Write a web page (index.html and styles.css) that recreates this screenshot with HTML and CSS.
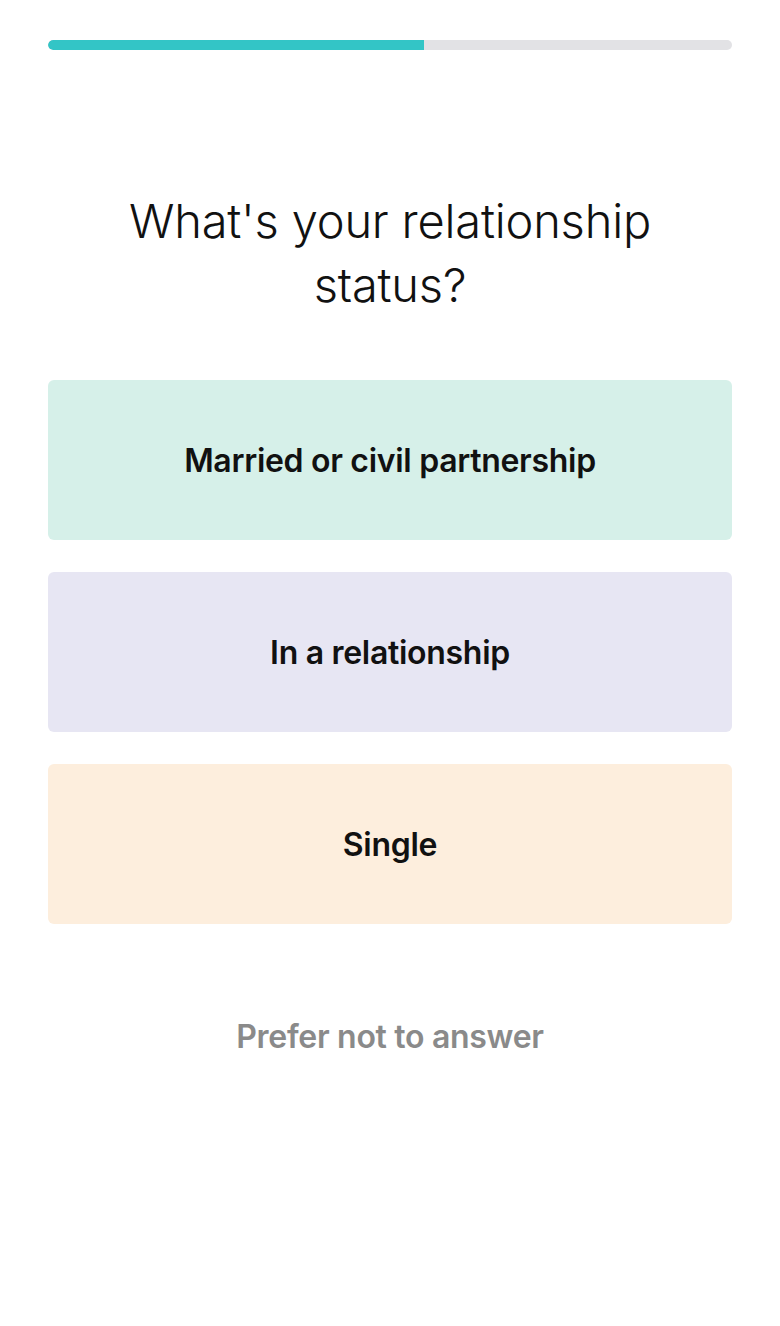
FILE: index.html
```html
<!DOCTYPE html>
<html lang="en">
<head>
    <meta charset="UTF-8">
    <meta name="viewport" content="width=device-width, initial-scale=1.0">
    <title>Relationship status</title>
    <link rel="stylesheet" href="styles.css">
</head>
<body>
    <div class="quiz">
        <div class="progress">
            <div class="progress-fill" style="width:55%"></div>
        </div>
        <h1 class="question">What's your relationship<br>status?</h1>
        <div class="options">
            <button class="option option-green" type="button">Married or civil partnership</button>
            <button class="option option-purple" type="button">In a relationship</button>
            <button class="option option-orange" type="button">Single</button>
        </div>
        <button class="skip" type="button">Prefer not to answer</button>
    </div>
</body>
</html>
```

FILE: styles.css
```css
body {
    margin: 0;
    padding: 0;
    background: #fff;
    font-family: Inter, 'Noto Sans', sans-serif;
    color: #111;
}
.quiz {
    padding: 40px 48px;
    display: flex;
    flex-direction: column;
}
.progress {
    height: 10px;
    background: #e2e2e5;
    border-radius: 5px;
    overflow: hidden;
}
.progress-fill {
    height: 100%;
    background: #33c5c6;
    border-radius: 5px 0 0 5px;
}
.question {
    margin: 139px 0 0;
    font-size: 47px;
    font-weight: 300;
    line-height: 64px;
    text-align: center;
    letter-spacing: -0.2px;
}
.options {
    margin-top: 63px;
    display: flex;
    flex-direction: column;
    gap: 32px;
}
.option {
    height: 160px;
    border: none;
    border-radius: 6px;
    font-family: inherit;
    font-size: 32px;
    font-weight: 600;
    color: #111;
    cursor: pointer;
    letter-spacing: -0.3px;
}
.option-green { background: #d6f0e9; }
.option-purple { background: #e7e6f3; }
.option-orange { background: #fdeedd; }
.skip {
    margin-top: 92px;
    align-self: center;
    background: none;
    border: none;
    font-family: inherit;
    font-size: 32px;
    font-weight: 600;
    color: #8a8a8a;
    cursor: pointer;
    letter-spacing: -0.3px;
}
```
